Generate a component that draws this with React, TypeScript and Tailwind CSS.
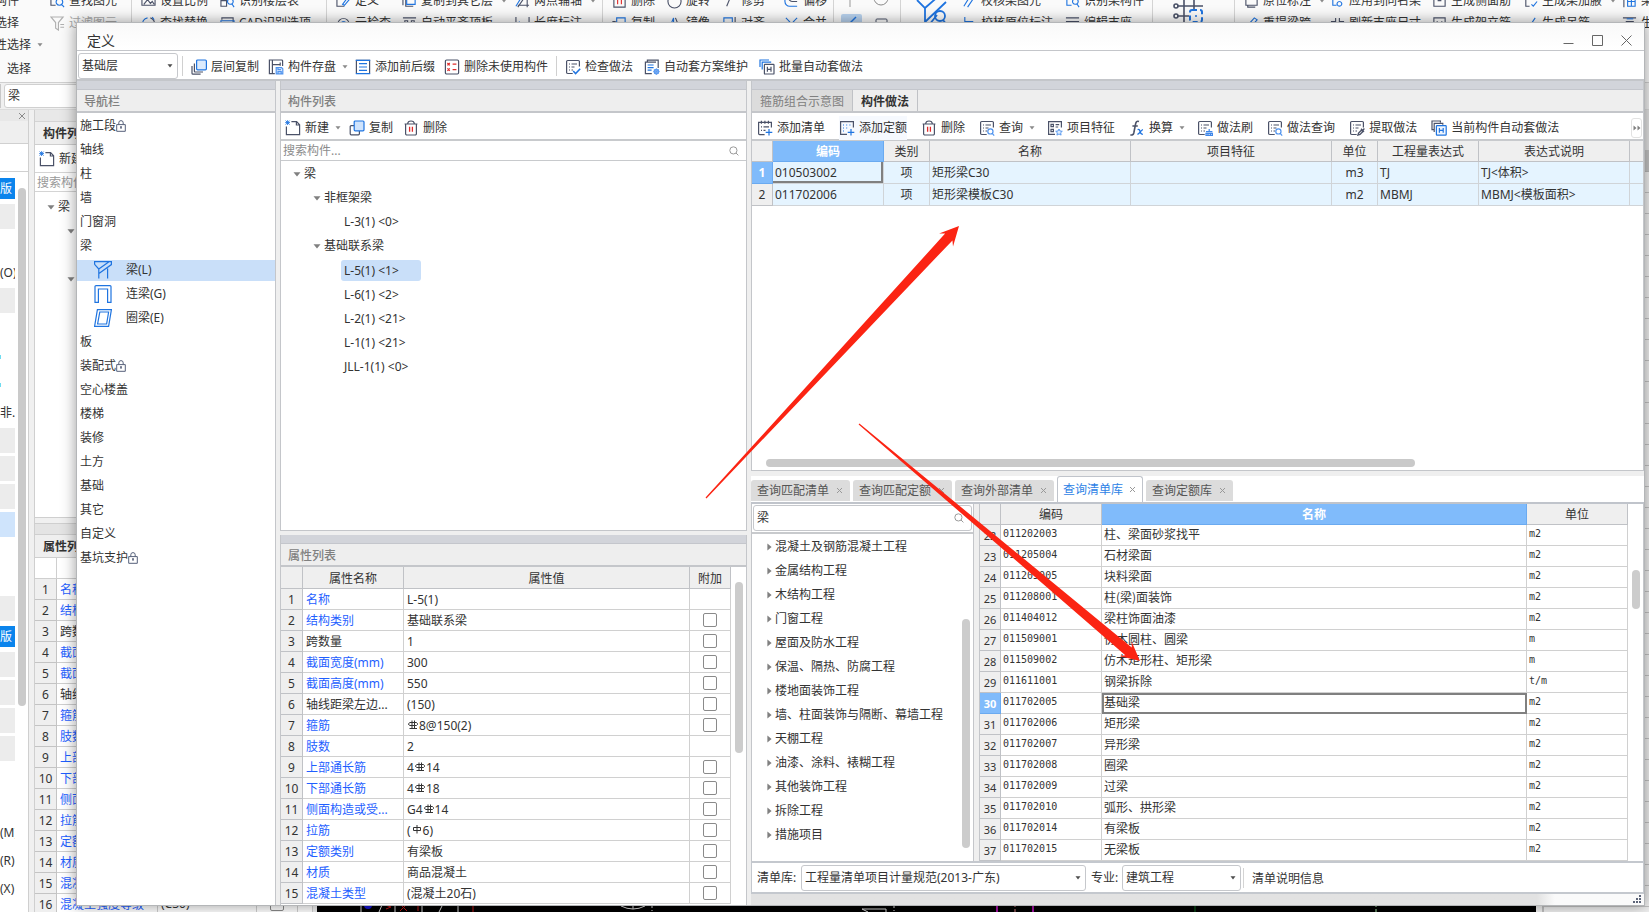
import type { ReactNode } from "react";

const DARK = "#4b5268";
const BLUE = "#1f74e0";
const RED = "#e02b2b";

/* ------------------------------------------------------------------ icons */

type IconProps = { children: ReactNode; className?: string };

function Svg({ children, className = "h-4 w-4" }: IconProps) {
  return (
    <svg viewBox="0 0 16 16" fill="none" strokeWidth="1.2" stroke={DARK} className={`${className} shrink-0`} aria-hidden="true">
      {children}
    </svg>
  );
}

function Caret({ className = "text-[#8a8a8a]" }: { className?: string }) {
  return (
    <svg viewBox="0 0 6 4" className={`h-1 w-1.5 shrink-0 ${className}`} fill="currentColor" aria-hidden="true">
      <path d="M0.5 0.3h5L3 3.5z" />
    </svg>
  );
}

function TreeDown() {
  return (
    <svg viewBox="0 0 8 5" className="h-[5px] w-2 shrink-0" fill="#808080" aria-hidden="true">
      <path d="M0.5 0.3h7L4 4.6z" />
    </svg>
  );
}

function TreeRight() {
  return (
    <svg viewBox="0 0 5 8" className="h-2 w-[5px] shrink-0" fill="#808080" aria-hidden="true">
      <path d="M0.4 0.6v6.8L4.6 4z" />
    </svg>
  );
}

function DocBase() {
  return (
    <>
      <path d="M14.4 7.5V2.6a1.1 1.1 0 0 0-1.1-1.1H2.7a1.1 1.1 0 0 0-1.1 1.1v10.8a1.1 1.1 0 0 0 1.1 1.1h5" />
      <path d="M4 5h1M6.5 5H12M4 8h1M6.5 8h3M4 11h1M6.5 11h1.5" />
    </>
  );
}

const icons = {
  layers: (
    <Svg>
      <path d="M3.4 4.5v7.7a.8.8 0 0 0 .8.8H12M1 7v7.2a1 1 0 0 0 1 1h7.6" />
      <rect x="5.6" y="1" width="9.8" height="9.8" rx="1" stroke={BLUE} fill="#dcebfd" />
    </Svg>
  ),
  save: (
    <Svg>
      <path d="M14.6 7V2a1 1 0 0 0-1-1H1.4v13.6h5.4M4.4 1v13.2M4.4 5.6h7.8M12.2 3.4v3.4" />
      <path d="M8.2 8.6h5.4l1.2 1.2v5H8.2zM10 8.6v2h3M10 14.8v-2.2h3.2v2.2" stroke="#4f93ee" fill="#dcebfd" />
    </Svg>
  ),
  prefix: (
    <Svg>
      <path d="M1.4 14.6V1.4h13.2v13.2" />
      <path d="M4 4.6h8M4 8h8M4 11.4h8M0.8 14.6h14.4M0.8 1.4h14.4" stroke={BLUE} />
    </Svg>
  ),
  unused: (
    <Svg>
      <rect x="1.4" y="1" width="13.2" height="14" rx="1.2" />
      <path d="M3.4 4l2.4 2.4M5.8 4L3.4 6.4M3.4 9.4l2.4 2.4M5.8 9.4l-2.4 2.4M8.6 5.2h3.8M8.6 10.6h3.8" stroke={RED} />
    </Svg>
  ),
  check: (
    <Svg>
      <DocBase />
      <path d="M8.2 12l2.4 2.6 4.6-4.8" stroke={BLUE} strokeWidth="1.5" />
    </Svg>
  ),
  scheme: (
    <Svg>
      <path d="M3.4 3V1.2h10.8V9M12 3.2H1.4v11.4h6.4" />
      <path d="M3.6 6h6M3.6 8.6h6M3.6 11.2h4" stroke={BLUE} />
      <circle cx="12.4" cy="12.6" r="2.2" stroke="#5c9bf0" fill="#b9d6fb" />
      <path d="M12.4 9.2v6.8M9 12.6h6.8M10 10.2l4.8 4.8M14.8 10.2L10 15" stroke="#5c9bf0" strokeWidth="0.8" />
    </Svg>
  ),
  batch: (
    <Svg>
      <path d="M1 8V1h9M3.2 10.4V3.2h9" stroke={BLUE} />
      <rect x="5.4" y="5.4" width="9.6" height="9.6" rx="0.6" fill="#fff" />
      <path d="M8.4 7.8v5M12 7.8v5M8.4 10.3H12" />
    </Svg>
  ),
  create: (
    <Svg>
      <path d="M6.4 1.6h5.2l3 3.2v9.8H1.4V6.6M11.4 1.8V5h3" />
      <path d="M0.6 0.6l4 4M4.6 0.6l-4 4M2.6 0.2V5M0.2 2.6H5" stroke={BLUE} strokeWidth="0.9" />
    </Svg>
  ),
  copy: (
    <Svg>
      <path d="M5 5.6H2.2a1 1 0 0 0-1 1v7.2a1 1 0 0 0 1 1h7.2a1 1 0 0 0 1-1V11" />
      <rect x="5.2" y="1" width="9.8" height="9.8" rx="1" stroke={BLUE} fill="#cfe3fc" />
    </Svg>
  ),
  trash: (
    <Svg>
      <path d="M1.600 4h12.800M4.6 3.8C4.8 1.8 6 1 8 1s3.2.8 3.4 2.8M2.6 4v9.8a1.2 1.2 0 0 0 1.2 1.2h8.4a1.2 1.2 0 0 0 1.2-1.2V4" />
      <path d="M6.6 6.8v5M9.4 6.8v5" stroke={RED} strokeWidth="1.3" />
    </Svg>
  ),
  addList: (
    <Svg>
      <path d="M14.4 7.5V2.4H1.6v11.2a1 1 0 0 0 1 1h5M4.4 0.8v3M7.9 0.8v3M11.4 0.8v3M4 6.8h1M6.5 6.8H12M4 10.4h1M6.5 10.4h2" />
      <path d="M12 9v6.6M8.7 12.3h6.6" stroke={BLUE} />
    </Svg>
  ),
  addQuota: (
    <Svg>
      <path d="M14.4 7.5V1.6H1.6v12.8H8" />
      <path d="M4 5h1M7.2 5h1M10.4 5h1M4 8h1M7.2 8h1M4 11h1M12 9v6.6M8.7 12.3h6.6" stroke={BLUE} />
    </Svg>
  ),
  query: (
    <Svg>
      <DocBase />
      <circle cx="11.4" cy="11.4" r="2.6" stroke="#4f93ee" fill="#fff" />
      <path d="M13.2 13.4l2 2.2" stroke="#4f93ee" />
    </Svg>
  ),
  feature: (
    <Svg>
      <path d="M14.4 7.5V1.6H1.6v12.8H8M4 4.4h2.4v2.2H4zM4 9.4h2.4v2.2H4zM8.6 4.6h3.6M8.6 7h2.6" />
      <path d="M12 9l1 2 2.3.3-1.7 1.5.5 2.3L12 14l-2.1 1.1.5-2.3-1.7-1.5L11 11z" stroke="#4f93ee" fill="#dcebfd" strokeWidth="0.9" />
    </Svg>
  ),
  fx: (
    <Svg>
      <path d="M10 1.6c-2-.9-3 .2-3.4 2.2L4.8 13c-.4 1.8-1.6 2.4-3.4 1.8M3.4 6h5.4" strokeWidth="1.6" />
      <path d="M8.6 9.6c1.8-.6 2 .4 2.6 2.4s1 2.6 2.6 2.2M14 9.6c-2 .2-3.4 4.4-5.6 4.8" stroke={BLUE} strokeWidth="1.3" />
    </Svg>
  ),
  brush: (
    <Svg>
      <DocBase />
      <path d="M9 11.6h6.4M9 13.4h6.4V15.4H9zM12.2 9v2.6M11 13.4v2M13.4 13.4v2" stroke="#3f87ea" />
    </Svg>
  ),
  extract: (
    <Svg>
      <DocBase />
      <path d="M9 15l.6-2 3-3 1.4 1.4-3 3zM12 8.8l3 3M13.8 10.2l1.6-1.6" strokeWidth="1.4" />
    </Svg>
  ),
  autoCurrent: (
    <Svg>
      <path d="M3 9.6H1V1h8.4v1.6M3.2 12V3.4h8.6v1.4" />
      <rect x="5.4" y="5.6" width="9.8" height="9.6" rx="0.6" stroke={BLUE} fill="#eef5fe" />
      <path d="M8.4 8v4.8M12.2 8v4.8M8.4 10.4h3.8" stroke={BLUE} />
    </Svg>
  ),
};

type IconName = keyof typeof icons;

function SearchGlyph() {
  return (
    <svg viewBox="0 0 10 10" className="h-2.5 w-2.5 shrink-0" fill="none" stroke="#9a9a9a" aria-hidden="true">
      <circle cx="4.4" cy="4.4" r="3.6" />
      <path d="M7 7l2.4 2.4" />
    </svg>
  );
}

function Lock() {
  return (
    <svg viewBox="0 0 10 12" className="h-3 w-2.5 shrink-0" fill="none" stroke="#56607a" aria-hidden="true">
      <path d="M0.7 4.6h8.6v6.7H0.7zM2.8 4.4V2.8a2.2 2.2 0 0 1 4.4 0v1.6M5 7v2" />
      <circle cx="5" cy="7" r="0.6" />
    </svg>
  );
}

function BeamIcon({ kind }: { kind: "beam" | "link" | "ring" }) {
  return (
    <svg viewBox="0 0 18 18" className="h-[18px] w-[18px] shrink-0" fill="none" stroke={BLUE} strokeWidth="1.2" aria-hidden="true">
      {kind === "beam" && <path d="M0.6 3.600V0.6h16.8v3L4.6 12.800M0.6 3.400L4.8 8v9.400M4.8 8L15 0.8M13.600 7.400v10" />}
      {kind === "link" && <path d="M1 17.4V1.6a1 1 0 0 1 1-1h14a1 1 0 0 1 1 1v15.8h-3.4V4H4.4v13.4z" />}
      {kind === "ring" && <path d="M3.4 0.6h14L14.6 17.4h-14zM5.8 3h8.8l-2 12H3.6z" />}
    </svg>
  );
}

/* -------------------------------------------------------- shared controls */

function ToolButton({ icon, label, caret, hover }: { icon: IconName; label: string; caret?: boolean; hover?: boolean }) {
  return (
    <button
      type="button"
      className={`flex h-6 shrink-0 items-center gap-1 whitespace-nowrap ${hover ? "bg-[#f6f9fe]" : ""} ${caret ? "-mr-0.5" : ""}`}
    >
      {icons[icon]}
      <span>{label}</span>
      {caret && (
        <span className="pl-0.5">
          <Caret />
        </span>
      )}
    </button>
  );
}

function Select({ label, value, className }: { label: string; value: string; className: string }) {
  return (
    <div className={`relative flex shrink-0 ${className}`}>
      <select
        aria-label={label}
        defaultValue={value}
        className="w-full appearance-none rounded-[3px] border border-[#c6c8cc] bg-white pr-4 pl-[3px] text-xs text-[#333]"
      >
        <option>{value}</option>
      </select>
      <span className="pointer-events-none absolute top-0 right-[5px] flex h-full items-center">
        <Caret className="text-[#4d4d4d]" />
      </span>
    </div>
  );
}

function PanelHead({ children }: { children: ReactNode }) {
  return (
    <>
      <div className="h-[9px] shrink-0 border-b border-[#c4c6cc] bg-[#d2d4da]" />
      <div className="flex h-[23px] shrink-0 items-stretch border-b-2 border-[#c4c6ca] bg-[#eeeeee]">{children}</div>
    </>
  );
}

function PanelTitle({ children }: { children: ReactNode }) {
  return <span className="pl-[7px] leading-6 font-medium text-[#808080]">{children}</span>;
}

function Rebar({ plain }: { plain?: boolean }) {
  return (
    <svg viewBox="0 0 10 10" className="mx-px mb-1 inline-block h-2.5 w-2.5" fill="none" stroke="#333" aria-hidden="true">
      {plain ? (
        <path d="M1.5 2.5h7v3h-7zM5 0v8.5" />
      ) : (
        <path d="M2 2.5h6.500l1 1.2v.8l-1 1H2L0.500 4.500v-.8zM4 0.500v8M6.500 0.500v8M1.500 8.500h7.500" />
      )}
    </svg>
  );
}

/* ------------------------------------------------------- background window */

type RibbonItem = { t: string; d?: string; b?: string; caret?: boolean; muted?: boolean };
type RibbonCol = { w: string; items: RibbonItem[] };

const ribbon: RibbonCol[][] = [
  [
    {
      w: "w-[81px]",
      items: [
        { t: "查找图元", d: "M6 12H1V2h12v3", b: "M10 5a3.500 3.500 0 1 0 .1 0M12.500 11l2.500 3" },
        { t: "过滤图元", d: "M1 1h13L9 7v8l-3-2V7zM11 9h4M11 12h4", muted: true },
      ],
    },
  ],
  [
    {
      w: "w-[79px]",
      items: [
        { t: "设置比例", d: "M1 12V2h14v10zM3 11l4-5 3 4 2-2 2 3" },
        { t: "查找替换", d: "M10 2a6 6 0 0 1 4 8", b: "M7 2a6 6 0 0 0-5 8M12 1l2 3" },
      ],
    },
    {
      w: "w-[106px]",
      items: [
        { t: "识别楼层表", d: "M1 2h6v11H1zM1 7h6", b: "M11 5a3 3 0 1 0 .1 0M13 11l2 3" },
        { t: "CAD识别选项", d: "M2 4V2h12v13H2V9", b: "M1 5h14v5H1z" },
      ],
    },
  ],
  [
    {
      w: "w-[66px]",
      items: [
        { t: "定义", d: "M9 13H1V2h8", b: "M7 11l6-8 2 2-6 7z" },
        { t: "云检查", d: "M3 12a6 6 0 1 1 10 0", b: "M8 6a3 3 0 1 0 .1 0" },
      ],
    },
    {
      w: "w-[113px]",
      items: [
        { t: "复制到其它层", d: "M1 12V5h3v8h8", b: "M5 2h9v9H5z", caret: true },
        { t: "自动平齐顶板", d: "M1 2h14M3 5h3v10H3zM10 5h3v10h-3z" },
      ],
    },
    {
      w: "w-[87px]",
      items: [
        { t: "两点辅轴", d: "M3 14L12 1M3 12h12M13 2v12", b: "M1 13L6 5", caret: true },
        { t: "长度标注", d: "M1 1v12M15 1v12", b: "M3 8h10M5 6L3 8l2 2" },
      ],
    },
  ],
  [
    {
      w: "w-[55px]",
      items: [
        { t: "删除", d: "M2 2h12v12H2z", b: "M6 6v5M10 6v5" },
        { t: "复制", d: "M4 6H1v8h9", b: "M5 2h9v9H5z" },
      ],
    },
    {
      w: "w-[55px]",
      items: [
        { t: "旋转", d: "M3 3a7 7 0 1 0 10 0" },
        { t: "镜像", d: "M9 2l5 12H9", b: "M7 2L2 14h5z" },
      ],
    },
    {
      w: "w-[62px]",
      items: [
        { t: "修剪", d: "M10 1L5 13" },
        { t: "对齐", d: "M14 1v14", b: "M2 2h9v7H2z" },
      ],
    },
    {
      w: "w-[49px]",
      items: [
        { t: "偏移", d: "M14 8H9a4 4 0 0 1-4-4", b: "M14 13H6a5 5 0 0 1-5-5V5" },
        { t: "合并", b: "M2 2l4 4-4 4M14 2l-4 4 4 4" },
      ],
    },
  ],
];

const ribbonMid: RibbonCol[] = [
  {
    w: "w-[103px]",
    items: [
      { t: "校核梁图元", b: "M2 13l5-8M6 14l6-9" },
      { t: "校核原位标注", b: "M3 1v14M3 6h9M3 10h6" },
    ],
  },
  {
    w: "w-[87px]",
    items: [
      { t: "识别梁构件", b: "M2 4v8h5M11 5a3 3 0 1 0 .1 0M13 11l2 3" },
      { t: "编辑支座", d: "M1 2h14M1 6h14M4 10h8", b: "M10 8l4 6" },
    ],
  },
];

const ribbonEnd: RibbonCol[] = [
  {
    w: "w-[86px]",
    items: [
      { t: "原位标注", d: "M2 4h12v8H2zM4 12v2h8", caret: true },
      { t: "重提梁跨", b: "M3 14l1-4 7-8 3 2-8 9z" },
    ],
  },
  {
    w: "w-[102px]",
    items: [
      { t: "应用到同名梁", b: "M3 4v8h4M10 8a2.500 2.500 0 1 0 .1 0" },
      { t: "刷新支座尺寸", d: "M6 2v4H1M10 2v4h5M6 14v-4H1M10 14v-4h5" },
    ],
  },
  {
    w: "w-[91px]",
    items: [
      { t: "生成侧面筋", d: "M2 2h12v11H2zM6 7h4" },
      { t: "生成架立筋", d: "M2 2h12v13H2zM5 6h1M10 6h1" },
    ],
  },
  {
    w: "w-[99px]",
    items: [
      { t: "生成梁加腋", d: "M8 2H3v11h4", b: "M9 11l2 2 4-5", caret: true },
      { t: "生成吊筋", b: "M2 11l3 3 8-12" },
    ],
  },
  {
    w: "w-[60px]",
    items: [
      { t: "梁", d: "M2 2v12", b: "M6 3h8v10H6zM6 8h8M10 3v10" },
      { t: "生", d: "M1 2h14M4 6h8v9H4", b: "M5 3h7" },
    ],
  },
];

function RibbonColumn({ col }: { col: RibbonCol }) {
  return (
    <div className={`flex shrink-0 flex-col ${col.w}`}>
      {col.items.map((it) => (
        <button
          key={it.t}
          type="button"
          className={`flex h-[22px] items-center gap-1 whitespace-nowrap ${it.muted ? "text-[#a8a8a8]" : ""}`}
        >
          <Svg className="h-[15px] w-[15px]">
            {it.d && <path d={it.d} stroke={it.muted ? "#b0b0b0" : DARK} />}
            {it.b && <path d={it.b} stroke={it.t === "删除" ? RED : BLUE} />}
          </Svg>
          <span>{it.t}</span>
          {it.caret && (
            <span className="pl-1">
              <Caret />
            </span>
          )}
        </button>
      ))}
    </div>
  );
}

function RibbonGroup({ cols }: { cols: RibbonCol[] }) {
  return (
    <div className="flex shrink-0 border-r border-[#d4d4d4] pl-[9px]">
      {cols.map((c) => (
        <RibbonColumn key={c.items[0].t} col={c} />
      ))}
    </div>
  );
}

function Ribbon() {
  return (
    <div className="flex h-[83px] shrink-0 overflow-hidden border-b border-[#d0d0d0] bg-[#fafafa]">
      <div className="-mt-[10px] flex">
        <div className="-ml-[5px] flex w-[46px] shrink-0 flex-col whitespace-nowrap">
          <span className="h-[22px] leading-[22px]">构件</span>
          <span className="h-[22px] leading-[22px]">选择</span>
          <span className="flex h-[26px] items-center gap-1.5">
            性选择
            <Caret />
          </span>
          <span className="h-[26px] pl-3 leading-[26px]">选择</span>
        </div>
        {ribbon.map((g) => (
          <RibbonGroup key={g[0].items[0].t} cols={g} />
        ))}
        <div className="flex w-[67px] shrink-0 flex-wrap content-start border-r border-[#d4d4d4] pl-1.5">
          <svg viewBox="0 0 56 44" className="h-11 w-14" fill="none" stroke={DARK} aria-hidden="true">
            <path d="M10 5v12" stroke="#999" />
            <circle cx="41" cy="8" r="7" stroke="#8a8a8a" />
            <rect x="1" y="24" width="21" height="20" rx="2" fill="#b8d2ee" stroke="none" />
            <path d="M5 38l11-11" stroke={BLUE} strokeWidth="1.5" />
            <rect x="36" y="29" width="11" height="10" rx="1" />
          </svg>
        </div>
        <div className="w-[53px] shrink-0 pl-[15px]">
          <svg viewBox="0 0 32 44" className="h-11 w-8" fill="none" stroke={BLUE} strokeWidth="1.8" aria-hidden="true">
            <path d="M1 10l8 8v22l12-15M9 18L25 4M9 32L30 12" />
            <circle cx="24" cy="26" r="5" />
            <path d="M27 30l4 5" />
          </svg>
        </div>
        <div className="flex shrink-0 border-r border-[#d4d4d4] pl-2">
          {ribbonMid.map((c) => (
            <RibbonColumn key={c.items[0].t} col={c} />
          ))}
        </div>
        <div className="w-[82px] shrink-0 border-r border-[#d4d4d4] pl-5">
          <svg viewBox="0 0 32 44" className="h-11 w-8" fill="none" stroke={DARK} strokeWidth="1.6" aria-hidden="true">
            <path d="M4 16h26M4 26h12M11 6v30M21 6v13" />
            <circle cx="3" cy="16" r="2" />
            <circle cx="3" cy="26" r="2" />
            <rect x="17" y="20" width="12" height="12" rx="2" stroke={BLUE} strokeDasharray="5 3" strokeWidth="2" />
            <path d="M22 26h2" stroke={BLUE} />
          </svg>
        </div>
        <div className="flex shrink-0 pl-[9px]">
          {ribbonEnd.map((c) => (
            <RibbonColumn key={c.items[0].t} col={c} />
          ))}
        </div>
      </div>
    </div>
  );
}

const dockCells: string[] = [
  "版", "g", "", "(O)", "g", "", "dot", "dot", "非..", "g", "g", "g", "sel", "", "",
  "g", "版", "g", "g", "g", "g", "", "", "(M)", "(R)", "(X)",
];

function DockCell({ v }: { v: string }) {
  const base = "mb-[3px] flex h-[25px] shrink-0 items-center overflow-hidden whitespace-nowrap";
  if (v === "g") return <div className={`${base} bg-[#ececec]`} />;
  if (v === "sel") return <div className={`${base} bg-[#cfe4fc]`} />;
  if (v === "版") return <div className={`${base} border-y-2 border-white bg-[#0b84ec] text-white`}>{v}</div>;
  if (v === "dot")
    return (
      <div className={base}>
        <span className="h-1 w-px bg-[#6fdcf0]" />
      </div>
    );
  return <div className={base}>{v}</div>;
}

const bgNames = [
  "名称", "结构类别", "跨数量", "截面宽度(mm)", "截面高度(mm)", "轴线距梁左边", "箍筋", "肢数", "上部通长筋",
  "下部通长筋", "侧面构造", "拉筋", "定额类别", "材质", "混凝土类型", "混凝土强度等级",
];

function Backdrop() {
  return (
    <div className="flex h-full flex-col overflow-hidden bg-[#f0f0f0]">
      <Ribbon />
      <div className="flex h-[27px] shrink-0 items-center gap-[3px] border-b border-[#dcdcdc]">
        <div className="h-6 w-px bg-[#c8c8c8]" />
        <div className="flex h-6 w-40 items-center rounded-[3px] border border-[#d0d0d0] bg-white pl-[3px]">梁</div>
      </div>
      <div className="flex min-h-0 flex-1">
        <div className="flex w-[29px] shrink-0 flex-col border-r border-[#cfcfcf] bg-white">
          <div className="flex h-[11px] shrink-0 items-center justify-end bg-[#e8e8e8] pr-0.5">
            <svg viewBox="0 0 8 8" className="h-2 w-2" stroke="#8a8a8a" aria-hidden="true">
              <path d="M1 1l6 6M7 1L1 7" />
            </svg>
          </div>
          <div className="h-[23px] shrink-0 border-b border-[#d0d0d0] bg-[#efefef]" />
          <div className="h-7 shrink-0 border-b border-[#d0d0d0]" />
          <div className="flex min-h-0 flex-1 gap-[3px] pt-1">
            <div className="flex w-[15px] flex-col overflow-hidden">
              {dockCells.map((v, i) => (
                <DockCell key={i} v={v} />
              ))}
            </div>
            <div className="mt-3 h-[518px] w-2 rounded-full bg-[#cacaca]" />
          </div>
        </div>
        <div className="ml-[5px] flex w-[279px] shrink-0 flex-col border-x border-[#cfcfcf] bg-white">
          <div className="h-3 shrink-0 border-b border-[#d4d4d4] bg-[#e8e8e8]" />
          <div className="h-[23px] shrink-0 border-b border-[#cfcfcf] bg-[#efefef] pl-2 leading-6 font-bold">构件列表</div>
          <div className="flex h-7 shrink-0 items-center border-b border-[#d4d4d4] pl-1">
            <ToolButton icon="create" label="新建" />
          </div>
          <div className="h-[19px] shrink-0 border-b border-[#d4d4d4] pl-0.5 leading-[19px] text-[#999]">搜索构件...</div>
          <div className="h-[326px] shrink-0 border-b border-[#cfcfcf] pt-[3px]">
            <div className="flex h-6 items-center gap-[3px] pl-3">
              <TreeDown />梁
            </div>
            <div className="flex h-6 items-center pl-8">
              <TreeDown />
            </div>
            <div className="h-6" />
            <div className="flex h-6 items-center pl-8">
              <TreeDown />
            </div>
          </div>
          <div className="h-[5px] shrink-0 bg-[#f0f0f0]" />
          <div className="h-3 shrink-0 border-y border-[#cfcfcf] bg-[#e4e4e4]" />
          <div className="h-[23px] shrink-0 border-b border-[#cfcfcf] bg-[#efefef] pl-2 leading-6 font-bold">属性列表</div>
          <table className="w-[263px] table-fixed border-separate border-spacing-0">
            <colgroup>
              <col className="w-[22px]" />
              <col className="w-[101px]" />
              <col />
              <col className="w-[41px]" />
            </colgroup>
            <tbody>
              <tr>
                {[0, 1, 2, 3].map((i) => (
                  <td key={i} className="h-[21px] border-r border-b border-[#cfcfcf] p-0" />
                ))}
              </tr>
              {bgNames.map((n, i) => (
                <tr key={n}>
                  <td className="h-[21px] border-r border-b border-[#c4c4c4] bg-[#efefef] p-0 pt-0.5 text-center leading-[18px]">{i + 1}</td>
                  <td
                    className={`h-[21px] border-r border-b border-[#cfcfcf] p-0 pt-0.5 pl-[3px] leading-[18px] whitespace-nowrap ${
                      i === 2 || i === 5 ? "" : "text-[#1f5fff]"
                    }`}
                  >
                    {n}
                  </td>
                  <td className="h-[21px] border-r border-b border-[#cfcfcf] p-0 pl-[3px] leading-5">{i === 15 ? "(C30)" : ""}</td>
                  <td className="h-[21px] border-r border-b border-[#cfcfcf] p-0">
                    <span className="mx-auto block h-[14px] w-[14px] rounded-[2px] border border-[#8a8a8a]" />
                  </td>
                </tr>
              ))}
            </tbody>
          </table>
        </div>
        <div className="ml-1 flex min-w-0 flex-1 flex-col justify-end overflow-hidden bg-black">
          <svg className="h-2 w-full" fill="none" stroke="#d8d8d8" aria-hidden="true">
            <path d="M44 0v8M62 8l3-7M78 0v8M105 0v8M122 8l4-8M141 0v8M304 2q12 6 24 0M316 1v4M545 5h24v3M545 5l6 3" />
            <path d="M335 1v6M577 1v6" strokeDasharray="3 2" />
            <circle cx="51" cy="1" r="4" fill="#1414d0" stroke="none" />
            <path d="M68 1l6 2-5 2M83 7l6-6M84 1l6 6M101 1v6M156 1v7" stroke="#c01818" />
            <path d="M680 0v8M716 0v8" stroke="#a010a0" strokeWidth="2" />
            <path d="M698 0v8" stroke="#d88080" strokeDasharray="3 2" />
            <path d="M878 0v8" stroke="#0b6b1e" />
            <path d="M1059 0v8" stroke="#a8e8a8" strokeDasharray="3 2" />
          </svg>
        </div>
        <div className="ml-1.5 flex w-[107px] shrink-0 flex-col overflow-hidden border-l-2 border-[#c0c0c0] bg-white">
          <div className="h-10 shrink-0 bg-[#e4e4e4]" />
          <div className="h-[22px] shrink-0 border-b border-[#b8b8b8] bg-[#c4c4c4]" />
          {Array.from({ length: 36 }, (_, i) => (
            <div key={i} className="h-[21px] shrink-0 border-b border-[#c4c4c4] bg-[#f0f0f0]" />
          ))}
        </div>
      </div>
    </div>
  );
}

/* ------------------------------------------------------------------ dialog */

type NavItem = { t: string; lock?: boolean; kind?: "beam" | "link" | "ring"; active?: boolean };
const nav: NavItem[] = [
  { t: "施工段", lock: true },
  { t: "轴线" },
  { t: "柱" },
  { t: "墙" },
  { t: "门窗洞" },
  { t: "梁" },
  { t: "梁(L)", kind: "beam", active: true },
  { t: "连梁(G)", kind: "link" },
  { t: "圈梁(E)", kind: "ring" },
  { t: "板" },
  { t: "装配式", lock: true },
  { t: "空心楼盖" },
  { t: "楼梯" },
  { t: "装修" },
  { t: "土方" },
  { t: "基础" },
  { t: "其它" },
  { t: "自定义" },
  { t: "基坑支护", lock: true },
];

function NavPanel() {
  return (
    <nav className="flex w-[199px] shrink-0 flex-col border-r border-[#c4c6ca] bg-white">
      <PanelHead>
        <PanelTitle>导航栏</PanelTitle>
      </PanelHead>
      <ul className="pt-px">
        {nav.map((n) => (
          <li key={n.t} className="flex h-6 items-center">
            <a
              href="#"
              className={`flex h-[21px] w-full items-center whitespace-nowrap ${
                n.kind ? "gap-[14px] pl-[17px]" : "pl-[3px]"
              } ${n.active ? "bg-[#c9dff9]" : ""}`}
            >
              {n.kind && <BeamIcon kind={n.kind} />}
              {n.t}
              {n.lock && <Lock />}
            </a>
          </li>
        ))}
      </ul>
    </nav>
  );
}

const tree = [
  { t: "L-5(1) <1>", active: true },
  { t: "L-6(1) <2>" },
  { t: "L-2(1) <21>" },
  { t: "L-1(1) <21>" },
  { t: "JLL-1(1) <0>" },
];

type Prop = { n: string; v: ReactNode; box?: boolean; plain?: boolean };
const props: Prop[] = [
  { n: "名称", v: "L-5(1)" },
  { n: "结构类别", v: "基础联系梁", box: true },
  { n: "跨数量", v: "1", box: true, plain: true },
  { n: "截面宽度(mm)", v: "300", box: true },
  { n: "截面高度(mm)", v: "550", box: true },
  { n: "轴线距梁左边...", v: "(150)", box: true, plain: true },
  { n: "箍筋", v: <><Rebar />8@150(2)</>, box: true },
  { n: "肢数", v: "2" },
  { n: "上部通长筋", v: <>4<Rebar />14</>, box: true },
  { n: "下部通长筋", v: <>4<Rebar />18</>, box: true },
  { n: "侧面构造或受...", v: <>G4<Rebar />14</>, box: true },
  { n: "拉筋", v: <>(<Rebar plain />6)</>, box: true },
  { n: "定额类别", v: "有梁板", box: true },
  { n: "材质", v: "商品混凝土", box: true },
  { n: "混凝土类型", v: "(混凝土20石)", box: true },
];

function PropTable() {
  const th = "h-[22px] border-r border-b border-[#c0c2c6] bg-[#efefef] p-0 pt-0.5 text-center leading-[18px] font-normal";
  const td = "h-[21px] border-r border-b border-[#d0d0d0] p-0 pt-0.5 leading-[18px] whitespace-nowrap";
  return (
    <table className="min-w-0 flex-1 table-fixed border-separate border-spacing-0">
      <colgroup>
        <col className="w-[22px]" />
        <col className="w-[101px]" />
        <col />
        <col className="w-[41px]" />
      </colgroup>
      <thead>
        <tr>
          <th className={th} />
          <th className={th}>属性名称</th>
          <th className={th}>属性值</th>
          <th className={th}>附加</th>
        </tr>
      </thead>
      <tbody>
        {props.map((p, i) => (
          <tr key={p.n}>
            <td className="h-[21px] border-r border-b border-[#c0c2c6] bg-[#efefef] p-0 pt-0.5 text-center leading-[18px]">{i + 1}</td>
            <td className={`${td} pl-[3px] ${p.plain ? "" : "text-[#1f5fff]"}`}>{p.n}</td>
            <td className={`${td} pl-[3px]`}>{p.v}</td>
            <td className="h-[21px] border-r border-b border-[#d0d0d0] p-0">
              {p.box && (
                <input
                  type="checkbox"
                  aria-label={`附加 ${p.n}`}
                  className="mx-auto block h-[14px] w-[14px] appearance-none rounded-[2px] border border-[#8a8a8a] bg-white"
                />
              )}
            </td>
          </tr>
        ))}
      </tbody>
    </table>
  );
}

function ComponentColumn() {
  return (
    <div className="flex w-[467px] shrink-0 flex-col bg-[#efefef]">
      <section className="flex h-[450px] shrink-0 flex-col border-x border-b border-[#c4c6ca] bg-white">
        <PanelHead>
          <PanelTitle>构件列表</PanelTitle>
        </PanelHead>
        <div className="flex h-7 shrink-0 items-center gap-2.5 border-b-2 border-[#c8cacd] pt-[3px] pl-1">
          <ToolButton icon="create" label="新建" caret />
          <ToolButton icon="copy" label="复制" />
          <ToolButton icon="trash" label="删除" />
        </div>
        <div className="flex h-5 shrink-0 items-center border-b border-[#c8cacd] pr-[7px] pl-0.5">
          <input aria-label="搜索构件" placeholder="搜索构件..." className="min-w-0 flex-1 text-xs outline-none placeholder:text-[#8c8c8c]" />
          <SearchGlyph />
        </div>
        <ul className="pt-px">
          <li className="flex h-6 items-center gap-[3px] pl-3">
            <TreeDown />梁
          </li>
          <li className="flex h-6 items-center gap-[3px] pl-8">
            <TreeDown />
            非框架梁
          </li>
          <li className="flex h-6 items-center pl-[63px]">{"L-3(1) <0>"}</li>
          <li className="flex h-6 items-center gap-[3px] pl-8">
            <TreeDown />
            基础联系梁
          </li>
          {tree.map((n) => (
            <li key={n.t} className="flex h-6 items-center pl-[60px]">
              <span className={`h-[21px] w-20 rounded-[3px] pl-[3px] leading-[21px] whitespace-nowrap ${n.active ? "bg-[#c9dff9]" : ""}`}>
                {n.t}
              </span>
            </li>
          ))}
        </ul>
      </section>
      <section className="mt-1 flex min-h-0 flex-1 flex-col overflow-hidden border-x border-[#c4c6ca] bg-white">
        <PanelHead>
          <PanelTitle>属性列表</PanelTitle>
        </PanelHead>
        <div className="flex items-start">
          <PropTable />
          <div className="flex w-[15px] shrink-0 justify-center pt-[15px]">
            <div className="h-[171px] w-2 rounded-full bg-[#cccccc]" />
          </div>
        </div>
      </section>
    </div>
  );
}

function MethodTable() {
  const th = "h-[21px] border-r border-b border-[#c0c2c6] bg-[#efefef] p-0 pt-0.5 text-center leading-[18px] font-normal whitespace-nowrap";
  const td = "h-[22px] border-r border-b border-[#d0d4d8] bg-[#e5f4ff] p-0 leading-[21px] whitespace-nowrap";
  const rows = [
    ["010503002", "项", "矩形梁C30", "m3", "TJ", "TJ<体积>"],
    ["011702006", "项", "矩形梁模板C30", "m2", "MBMJ", "MBMJ<模板面积>"],
  ];
  return (
    <table className="w-full table-fixed border-separate border-spacing-0">
      <colgroup>
        <col className="w-[21px]" />
        <col className="w-[111px]" />
        <col className="w-[46px]" />
        <col className="w-[201px]" />
        <col className="w-[201px]" />
        <col className="w-[46px]" />
        <col className="w-[101px]" />
        <col className="w-[151px]" />
        <col />
      </colgroup>
      <thead>
        <tr>
          <th className={th} />
          <th className="h-[21px] border-r border-b border-[#6aaaf0] bg-[#80bbfb] p-0 pt-0.5 text-center leading-[18px] font-bold text-white">
            编码
          </th>
          <th className={th}>类别</th>
          <th className={th}>名称</th>
          <th className={th}>项目特征</th>
          <th className={th}>单位</th>
          <th className={th}>工程量表达式</th>
          <th className={th}>表达式说明</th>
          <th className="h-[21px] border-b border-[#c0c2c6] bg-[#efefef] p-0" />
        </tr>
      </thead>
      <tbody>
        {rows.map((r, i) => (
          <tr key={r[0]}>
            <td
              className={
                i === 0
                  ? "border-r border-b border-[#6aaaf0] bg-[#80bbfb] p-0 text-center font-bold text-white"
                  : "border-r border-b border-[#c0c2c6] bg-[#efefef] p-0 text-center"
              }
            >
              {i + 1}
            </td>
            <td className={`${td} pl-0.5 ${i === 0 ? "shadow-[inset_-2px_-2px_0_#808080]" : ""}`}>{r[0]}</td>
            <td className={`${td} text-center`}>{r[1]}</td>
            <td className={`${td} pl-0.5`}>{r[2]}</td>
            <td className={td} />
            <td className={`${td} text-center`}>{r[3]}</td>
            <td className={`${td} pl-0.5`}>{r[4]}</td>
            <td className={`${td} pl-0.5`}>{r[5]}</td>
            <td className="border-b border-[#d0d4d8] bg-[#e5f4ff] p-0" />
          </tr>
        ))}
      </tbody>
    </table>
  );
}

const queryTabs = ["查询匹配清单", "查询匹配定额", "查询外部清单", "查询清单库", "查询定额库"];
const chapters = [
  "混凝土及钢筋混凝土工程", "金属结构工程", "木结构工程", "门窗工程", "屋面及防水工程", "保温、隔热、防腐工程",
  "楼地面装饰工程", "墙、柱面装饰与隔断、幕墙工程", "天棚工程", "油漆、涂料、裱糊工程", "其他装饰工程", "拆除工程", "措施项目",
];
const library: [string, string, string][] = [
  ["011202003", "柱、梁面砂浆找平", "m2"],
  ["011205004", "石材梁面", "m2"],
  ["011205005", "块料梁面", "m2"],
  ["011208001", "柱(梁)面装饰", "m2"],
  ["011404012", "梁柱饰面油漆", "m2"],
  ["011509001", "仿木圆柱、圆梁", "m"],
  ["011509002", "仿木矩形柱、矩形梁", "m"],
  ["011611001", "钢梁拆除", "t/m"],
  ["011702005", "基础梁", "m2"],
  ["011702006", "矩形梁", "m2"],
  ["011702007", "异形梁", "m2"],
  ["011702008", "圈梁", "m2"],
  ["011702009", "过梁", "m2"],
  ["011702010", "弧形、拱形梁", "m2"],
  ["011702014", "有梁板", "m2"],
  ["011702015", "无梁板", "m2"],
];

function LibraryTable() {
  const th = "h-[21px] border-r border-b border-[#c0c2c6] bg-[#efefef] p-0 pt-0.5 text-center leading-[18px] font-normal";
  const td = "h-[21px] border-r border-b border-[#d0d0d0] p-0 whitespace-nowrap";
  const mono = "font-['DejaVu_Sans_Mono','Noto_Sans_CJK_SC',monospace] text-[10px] leading-4";
  return (
    <table className="min-w-0 flex-1 table-fixed border-separate border-spacing-0">
      <colgroup>
        <col className="w-[21px]" />
        <col className="w-[101px]" />
        <col />
        <col className="w-[101px]" />
      </colgroup>
      <thead>
        <tr>
          <th className={th} />
          <th className={th}>编码</th>
          <th className="h-[21px] border-r border-b border-[#6aaaf0] bg-[#80bbfb] p-0 pt-0.5 text-center leading-[18px] font-bold text-white">
            名称
          </th>
          <th className={th}>单位</th>
        </tr>
      </thead>
      <tbody>
        {library.map(([code, name, unit], i) => {
          const on = i === 8;
          return (
            <tr key={code}>
              <td
                className={`h-[21px] border-r border-b p-0 pt-0.5 text-center text-[11px] leading-4 ${
                  on ? "border-[#6aaaf0] bg-[#80bbfb] font-bold text-white" : "border-[#c0c2c6] bg-[#efefef]"
                }`}
              >
                {i + 22}
              </td>
              <td className={`${td} ${mono} pb-0.5 pl-0.5`}>{code}</td>
              <td
                className={`${td} pb-0.5 pl-0.5 font-['Noto_Sans_CJK_SC',sans-serif] leading-4 ${
                  on ? "outline-2 -outline-offset-2 outline-[#808080]" : ""
                }`}
              >
                {name}
              </td>
              <td className={`${td} ${mono} pb-0.5 pl-0.5`}>{unit}</td>
            </tr>
          );
        })}
      </tbody>
    </table>
  );
}

function QueryPanel() {
  return (
    <section className="flex min-h-0 flex-1 flex-col bg-white">
      <div className="flex h-7 shrink-0 items-end gap-[3px] border-b-2 border-[#c0c4cb]" role="tablist">
        {queryTabs.map((t) => {
          const on = t === "查询清单库";
          return (
            <button
              key={t}
              type="button"
              role="tab"
              aria-selected={on}
              className={`flex items-center rounded-t-[3px] whitespace-nowrap ${
                on
                  ? "h-[26px] gap-1.5 border border-b-0 border-[#c0c4cb] bg-white px-[5px] text-[#2d82e6]"
                  : "mb-px h-[21px] gap-[7px] bg-[#dcdcdc] px-1.5 text-[#555]"
              }`}
            >
              {t}
              <svg viewBox="0 0 7 7" className="mr-px h-[7px] w-[7px]" stroke="#999" aria-hidden="true">
                <path d="M1 1l5 5M6 1L1 6" />
              </svg>
            </button>
          );
        })}
      </div>
      <div className="flex min-h-0 flex-1 bg-[#efefef]">
        <div className="flex w-[223px] shrink-0 flex-col border-x border-[#c4c6ca] bg-white">
          <div className="h-[30px] shrink-0 border-b-2 border-[#c8cacd] px-px py-px">
            <div className="flex h-[26px] items-center rounded-[3px] border border-[#c6c8cc] pr-[7px] pl-[3px]">
              <input aria-label="查询" defaultValue="梁" className="min-w-0 flex-1 text-xs outline-none" />
              <SearchGlyph />
            </div>
          </div>
          <div className="flex min-h-0 flex-1 overflow-hidden">
            <ul className="flex-1 pt-px">
              {chapters.map((c) => (
                <li key={c} className="flex h-6 items-center gap-[3px] pl-[15px] whitespace-nowrap">
                  <TreeRight />
                  {c}
                </li>
              ))}
            </ul>
            <div className="mt-[85px] mr-[3px] h-[229px] w-2 shrink-0 rounded-full bg-[#cccccc]" />
          </div>
        </div>
        <div className="ml-[5px] flex min-w-0 flex-1 items-start overflow-hidden border-x border-[#c4c6ca] bg-white">
          <LibraryTable />
          <div className="flex w-[15px] shrink-0 justify-center pt-[66px]">
            <div className="h-[39px] w-2 rounded-full bg-[#cccccc]" />
          </div>
        </div>
      </div>
      <div className="flex h-[33px] shrink-0 items-center border-y-2 border-x border-[#c4c8ce] pl-[5px]">
        <span className="w-11 shrink-0">清单库:</span>
        <Select label="清单库" value="工程量清单项目计量规范(2013-广东)" className="h-[26px] w-[285px]" />
        <span className="w-9 shrink-0 pl-[5px]">专业:</span>
        <Select label="专业" value="建筑工程" className="h-[26px] w-[119px]" />
        <span className="ml-0.5 h-5 w-px bg-[#d4d4d4]" />
        <span className="pt-0.5 pl-2 whitespace-nowrap">清单说明信息</span>
      </div>
      <div className="flex h-[11px] shrink-0 items-center justify-end bg-linear-to-r from-[#e2e2e2] from-88% to-[#fafafa] to-90% pr-0.5">
        <svg viewBox="0 0 9 9" className="h-[9px] w-[9px]" fill="#5c6478" aria-hidden="true">
          <path d="M6 0h2v2H6zM3 3h2v2H3zM6 3h2v2H6zM0 6h2v2H0zM3 6h2v2H3zM6 6h2v2H6z" />
        </svg>
      </div>
    </section>
  );
}

function DefinitionDialog() {
  return (
    <div
      role="dialog"
      aria-label="定义"
      className="absolute top-[22px] right-1 bottom-1.5 left-[76px] flex flex-col overflow-hidden border border-[#b4b6b8] bg-[#efefef] shadow-[0_0_14px_rgba(0,0,0,0.4)]"
    >
      <header className="flex h-7 shrink-0 items-center border-b border-[#c4c6ca] bg-linear-to-b from-[#f9f9f9] to-white">
        <h1 className="flex-1 pt-2 pl-2.5 text-sm">定义</h1>
        <div className="flex gap-[18px] pt-2 pr-3">
          <button type="button" aria-label="最小化">
            <svg viewBox="0 0 11 11" className="h-[11px] w-[11px]" stroke="#666">
              <path d="M0.500 8.500h10" />
            </svg>
          </button>
          <button type="button" aria-label="最大化">
            <svg viewBox="0 0 11 11" className="h-[11px] w-[11px]" fill="none" stroke="#666">
              <path d="M0.500 0.500h10v10h-10z" />
            </svg>
          </button>
          <button type="button" aria-label="关闭">
            <svg viewBox="0 0 11 11" className="h-[11px] w-[11px]" stroke="#666">
              <path d="M0.500 0.500l10 10M10.500 0.500l-10 10" />
            </svg>
          </button>
        </div>
      </header>
      <div className="flex h-[30px] shrink-0 items-center gap-2 border-b-2 border-[#c4c6ca] bg-white pt-0.5 pl-px">
        <div className="flex items-center gap-1">
          <Select label="楼层" value="基础层" className="h-[26px] w-[100px]" />
          <span className="h-5 w-px bg-[#d0d0d0]" />
        </div>
        <div className="flex items-center gap-[9px] pt-0.5">
          <ToolButton icon="layers" label="层间复制" />
          <ToolButton icon="save" label="构件存盘" caret />
          <ToolButton icon="prefix" label="添加前后缀" />
          <ToolButton icon="unused" label="删除未使用构件" />
        </div>
        <span className="h-5 w-px bg-[#d0d0d0]" />
        <div className="flex items-center gap-[11px] pt-0.5">
          <ToolButton icon="check" label="检查做法" />
          <ToolButton icon="scheme" label="自动套方案维护" />
          <ToolButton icon="batch" label="批量自动套做法" />
        </div>
      </div>
      <div className="flex min-h-0 flex-1">
        <NavPanel />
        <div className="w-1 shrink-0" />
        <ComponentColumn />
        <div className="w-1 shrink-0" />
        <div className="flex min-w-0 flex-1 flex-col">
          <section className="flex h-[390px] shrink-0 flex-col border-x border-b border-[#c4c6ca] bg-white">
            <PanelHead>
              <button type="button" className="w-[101px] border-r border-[#c0c2c6] bg-[#dcdcdc] pt-0.5 text-[#808080]">
                箍筋组合示意图
              </button>
              <button type="button" className="w-[65px] border-r border-[#c0c2c6] pt-0.5 font-bold">
                构件做法
              </button>
            </PanelHead>
            <div className="flex h-7 shrink-0 items-center justify-between border-b-2 border-[#c8cacd] pt-[3px] pr-px pl-[5px]">
              <div className="flex min-w-0 items-center gap-[14px] overflow-hidden">
                <ToolButton icon="addList" label="添加清单" />
                <ToolButton icon="addQuota" label="添加定额" hover />
                <ToolButton icon="trash" label="删除" />
                <ToolButton icon="query" label="查询" caret />
                <ToolButton icon="feature" label="项目特征" />
                <ToolButton icon="fx" label="换算" caret />
                <ToolButton icon="brush" label="做法刷" />
                <ToolButton icon="query" label="做法查询" />
                <ToolButton icon="extract" label="提取做法" />
                <ToolButton icon="autoCurrent" label="当前构件自动套做法" />
              </div>
              <button type="button" aria-label="更多" className="flex h-5 w-[11px] items-center justify-center rounded-[3px] border border-[#e2e2e2]">
                <svg viewBox="0 0 8 6" className="h-1.5 w-2" fill="#808080" aria-hidden="true">
                  <path d="M0.500 0.500v5L3.500 3zM4.500 0.500v5L7.500 3z" />
                </svg>
              </button>
            </div>
            <MethodTable />
            <div className="flex flex-1 items-end pb-[3px] pl-[14px]">
              <div className="h-2 w-[74%] rounded-full bg-[#c9c9c9]" />
            </div>
          </section>
          <div className="h-[5px] shrink-0" />
          <QueryPanel />
        </div>
      </div>
    </div>
  );
}

/* ------------------------------------------------------- annotation arrows */

function arrowPoints(x1: number, y1: number, x2: number, y2: number) {
  const len = Math.hypot(x2 - x1, y2 - y1);
  const ux = (x2 - x1) / len;
  const uy = (y2 - y1) / len;
  const at = (back: number, side: number) => `${x2 - ux * back - uy * side},${y2 - uy * back + ux * side}`;
  return [at(len, 0.6), at(15, 5), at(19, 9.5), at(0, 0), at(19, -9.5), at(15, -5), at(len, -0.6)].join(" ");
}

function Arrows() {
  return (
    <svg className="pointer-events-none absolute inset-0 h-full w-full" fill="#fb2413" aria-hidden="true">
      <polygon points={arrowPoints(706, 498, 959, 226)} />
      <polygon points={arrowPoints(859, 424, 1140, 661)} />
    </svg>
  );
}

export default function App() {
  return (
    <div className="relative h-screen overflow-hidden font-['Noto_Sans','Noto_Sans_CJK_SC',sans-serif] text-xs text-[#333]">
      <Backdrop />
      <DefinitionDialog />
      <Arrows />
    </div>
  );
}
